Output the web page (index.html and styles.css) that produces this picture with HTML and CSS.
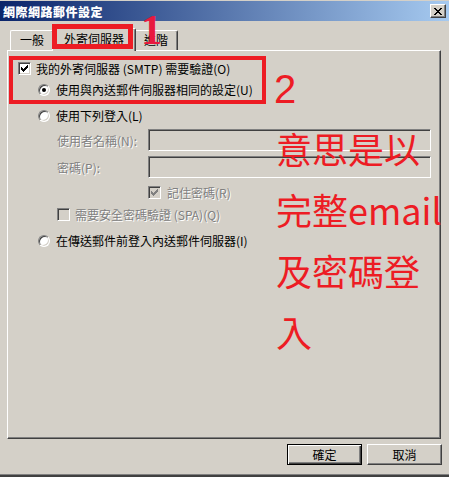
FILE: index.html
```html
<!DOCTYPE html>
<html lang="zh-Hant">
<head>
  <meta charset="UTF-8">
  <title>網際網路郵件設定</title>
  <link rel="stylesheet" href="styles.css">
</head>
<body>
  <div class="window">
    <div class="titlebar">
      <span class="title">網際網路郵件設定</span>
      <span class="close-btn">
        <svg width="8" height="7" viewBox="0 0 8 7" shape-rendering="crispEdges">
          <path d="M0 0h2v1h-2zM6 0h2v1h-2zM1 1h2v1h-2zM5 1h2v1h-2zM2 2h4v1h-4zM3 3h2v1h-2zM2 4h4v1h-4zM1 5h2v1h-2zM5 5h2v1h-2zM0 6h2v1h-2zM6 6h2v1h-2z" fill="#000"/>
        </svg>
      </span>
    </div>

    <div class="tabs">
      <div class="tab">一般</div>
      <div class="tab active">外寄伺服器</div>
      <div class="tab">進階</div>
    </div>

    <div class="panel">
      <div class="row r1">
        <span class="check"><svg width="7" height="7" viewBox="0 0 7 7" shape-rendering="crispEdges"><path d="M6 0h1v3h-1zM5 1h1v3h-1zM4 2h1v3h-1zM3 3h1v3h-1zM2 4h1v3h-1zM1 3h1v3h-1zM0 2h1v3h-1z" fill="#000"/></svg></span>
        <label>我的外寄伺服器 (SMTP) 需要驗證(O)</label>
      </div>
      <div class="row r2">
        <span class="radio on"></span>
        <label>使用與內送郵件伺服器相同的設定(U)</label>
      </div>
      <div class="row r3">
        <span class="radio"></span>
        <label>使用下列登入(L)</label>
      </div>
      <div class="row r4">
        <label class="field-label disabled">使用者名稱(N):</label>
        <span class="textbox"></span>
      </div>
      <div class="row r5">
        <label class="field-label disabled">密碼(P):</label>
        <span class="textbox"></span>
      </div>
      <div class="row r6">
        <span class="check off"><svg width="7" height="7" viewBox="0 0 7 7" shape-rendering="crispEdges"><path d="M6 0h1v3h-1zM5 1h1v3h-1zM4 2h1v3h-1zM3 3h1v3h-1zM2 4h1v3h-1zM1 3h1v3h-1zM0 2h1v3h-1z" fill="#808080"/></svg></span>
        <label class="disabled">記住密碼(R)</label>
      </div>
      <div class="row r7">
        <span class="check off"></span>
        <label class="disabled">需要安全密碼驗證 (SPA)(Q)</label>
      </div>
      <div class="row r8">
        <span class="radio"></span>
        <label>在傳送郵件前登入內送郵件伺服器(I)</label>
      </div>
    </div>

    <div class="buttons">
      <button class="btn default">確定</button>
      <button class="btn">取消</button>
    </div>

    <!-- annotations drawn on top of the dialog -->
    <div class="mark box1"></div>
    <div class="mark box2"></div>
    <div class="num one">1</div>
    <div class="num two">2</div>
    <div class="note">意思是以<br>完整email<br>及密碼登<br>入</div>
  </div>
</body>
</html>
```

FILE: styles.css
```css
body {
  margin: 0;
  width: 449px;
  height: 477px;
  overflow: hidden;
  background: #d4d0c8;
  font-family: "Noto Sans CJK TC", "Liberation Sans", sans-serif;
  font-size: 12px;
  color: #000;
}

.window {
  position: relative;
  height: 477px;
  box-sizing: border-box;
  padding-top: 1px;
  border-bottom: 2px solid #404040;
  box-shadow: inset 0 -1px #808080;
}

.titlebar {
  height: 20px;
  display: flex;
  align-items: center;
  justify-content: space-between;
  padding: 0 3px 0 3px;
  background: linear-gradient(to right, #0a246a, #a6caf0);
}

.title {
  color: #fff;
  font-weight: 900;
  font-size: 12px;
  letter-spacing: 0.5px;
}

.close-btn {
  width: 16px;
  height: 14px;
  box-sizing: border-box;
  display: flex;
  align-items: center;
  justify-content: center;
  background: #d4d0c8;
  border-top: 1px solid #fff;
  border-left: 1px solid #fff;
  border-right: 1px solid #404040;
  border-bottom: 1px solid #404040;
  box-shadow: inset -1px -1px #808080;
}

.tabs {
  height: 29px;
  display: flex;
  align-items: flex-end;
  padding-left: 10px;
}

.tab {
  height: 20px;
  box-sizing: border-box;
  padding: 0 9px;
  line-height: 18px;
  border-top: 1px solid #fff;
  border-left: 1px solid #fff;
  border-right: 1px solid #404040;
  border-radius: 2px 2px 0 0;
  box-shadow: inset -1px 0 #808080;
}

.tab.active {
  position: relative;
  z-index: 1;
  height: 23px;
  margin: 0 -2px -1px;
  padding: 0 11px;
  line-height: 19px;
  background: #d4d0c8;
}

.panel {
  margin-left: 7px;
  width: 434px;
  height: 389px;
  box-sizing: border-box;
  border-top: 1px solid #fff;
  border-left: 1px solid #fff;
  border-right: 1px solid #404040;
  border-bottom: 1px solid #404040;
  box-shadow: inset -1px -1px #808080;
}

.row {
  display: flex;
  align-items: center;
  height: 21px;
  gap: 5px;
}

.r1 { margin-top: 7px; padding-left: 10px; }
.r2 { padding-left: 30px; gap: 6px; }
.r3 { margin-top: 5px; padding-left: 30px; gap: 6px; }
.r4 { margin-top: 3px; height: 22px; padding-left: 49px; gap: 0; }
.r5 { margin-top: 5px; height: 22px; padding-left: 49px; gap: 0; }
.r6 { margin-top: 4px; padding-left: 140px; gap: 6px; }
.r7 { margin-top: 1px; padding-left: 49px; }
.r8 { margin-top: 5px; padding-left: 30px; gap: 6px; }

.disabled {
  color: #808080;
  text-shadow: 1px 1px 0 #fff;
}

.field-label {
  width: 91px;
}

.textbox {
  width: 283px;
  height: 22px;
  box-sizing: border-box;
  border-top: 1px solid #808080;
  border-left: 1px solid #808080;
  border-right: 1px solid #fff;
  border-bottom: 1px solid #fff;
  box-shadow: inset 1px 1px #404040, inset -1px -1px #d4d0c8;
}

.check {
  width: 13px;
  height: 13px;
  box-sizing: border-box;
  display: flex;
  align-items: center;
  justify-content: center;
  background: #fff;
  border-top: 1px solid #808080;
  border-left: 1px solid #808080;
  border-right: 1px solid #fff;
  border-bottom: 1px solid #fff;
  box-shadow: inset 1px 1px #404040, inset -1px -1px #d4d0c8;
}

.check.off {
  background: #d4d0c8;
}

.radio {
  position: relative;
  width: 12px;
  height: 12px;
  box-sizing: border-box;
  border-radius: 50%;
  background: #fff;
  border: 1px solid;
  border-color: #808080 #fff #fff #808080;
  box-shadow: inset 1px 1px #404040, inset -1px -1px #d4d0c8;
}

.radio.on::after {
  content: "";
  position: absolute;
  left: 3px;
  top: 3px;
  width: 4px;
  height: 4px;
  border-radius: 50%;
  background: #000;
}

.buttons {
  display: flex;
  justify-content: flex-end;
  gap: 5px;
  padding-right: 7px;
  margin-top: 5px;
}

.btn {
  width: 75px;
  height: 21px;
  box-sizing: border-box;
  padding: 0;
  font-family: "Noto Sans CJK TC", "Liberation Sans", sans-serif;
  font-size: 12px;
  color: #000;
  background: #d4d0c8;
  border-top: 1px solid #fff;
  border-left: 1px solid #fff;
  border-right: 1px solid #404040;
  border-bottom: 1px solid #404040;
  box-shadow: inset -1px -1px #808080;
}

.btn.default {
  border: 1px solid #000;
  box-shadow: inset 1px 1px #fff, inset -1px -1px #404040, inset -2px -2px #808080;
}

/* red annotations */
.mark {
  position: absolute;
  z-index: 2;
  box-sizing: border-box;
  border: 4px solid #ed1c24;
}

.box1 {
  left: 52px;
  top: 24px;
  width: 81px;
  height: 25px;
  border-width: 5px;
}

.box2 {
  left: 9px;
  top: 56px;
  width: 257px;
  height: 48px;
}

.num {
  position: absolute;
  z-index: 2;
  color: #ed1c24;
  line-height: 1;
}

.one {
  left: 141px;
  top: 9px;
  font-family: "Liberation Serif", serif;
  font-weight: bold;
  font-size: 42px;
  color: #e8193f;
}

.two {
  left: 274px;
  top: 69px;
  font-family: "Liberation Sans", sans-serif;
  font-size: 40px;
}

.note {
  position: absolute;
  z-index: 2;
  left: 276px;
  top: 118px;
  color: #ed1c24;
  font-family: "Noto Sans CJK TC", "Liberation Sans", sans-serif;
  font-size: 36px;
  line-height: 61px;
  white-space: nowrap;
}
```
